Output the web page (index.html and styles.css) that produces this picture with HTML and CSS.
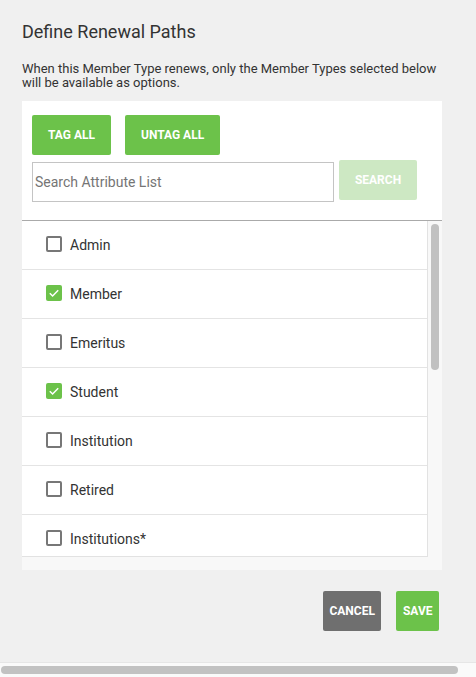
FILE: index.html
```html
<!DOCTYPE html>
<html>
<head>
<meta charset="utf-8">
<link rel="stylesheet" href="styles.css">
</head>
<body>
<div class="page">
  <div class="dialog">
    <h1 class="title">Define Renewal Paths</h1>
    <p class="desc">When this Member Type renews, only the Member Types selected below will be available as options.</p>
    <div class="panel">
      <div class="tools">
        <div class="btn-row">
          <button class="btn btn-green">TAG ALL</button>
          <button class="btn btn-green">UNTAG ALL</button>
        </div>
        <div class="search-row">
          <input class="search-input" type="text" placeholder="Search Attribute List">
          <button class="btn btn-disabled">SEARCH</button>
        </div>
      </div>
      <div class="list-wrap">
        <div class="list">
          <div class="row"><span class="cb"></span><span class="label">Admin</span></div>
          <div class="row"><span class="cb cb-on"><svg viewBox="0 0 16 16" width="16" height="16"><polyline points="3.8,8.2 6.6,11 12.2,5.2" fill="none" stroke="#fff" stroke-width="1.5"/></svg></span><span class="label">Member</span></div>
          <div class="row"><span class="cb"></span><span class="label">Emeritus</span></div>
          <div class="row"><span class="cb cb-on"><svg viewBox="0 0 16 16" width="16" height="16"><polyline points="3.8,8.2 6.6,11 12.2,5.2" fill="none" stroke="#fff" stroke-width="1.5"/></svg></span><span class="label">Student</span></div>
          <div class="row"><span class="cb"></span><span class="label">Institution</span></div>
          <div class="row"><span class="cb"></span><span class="label">Retired</span></div>
          <div class="row"><span class="cb"></span><span class="label">Institutions*</span></div>
        </div>
        <div class="vtrack"><div class="vthumb"></div></div>
      </div>
    </div>
    <div class="footer">
      <button class="btn btn-grey btn-small">CANCEL</button>
      <button class="btn btn-green btn-small">SAVE</button>
    </div>
  </div>
  <div class="htrack"><div class="hthumb"></div></div>
</div>
</body>
</html>
```

FILE: styles.css
```css
* { box-sizing: border-box; }
html, body { margin: 0; padding: 0; }
body {
  background: #f0f0f0;
  font-family: Roboto, "Liberation Sans", Arial, sans-serif;
  color: #333;
}
.page {
  height: 677px;
  display: flex;
  flex-direction: column;
  overflow: hidden;
}
.dialog {
  flex: 1;
  width: 420px;
  margin-left: 22px;
}
.title {
  margin: 21px 0 0;
  font-size: 18px;
  line-height: 21px;
  font-weight: 400;
  color: #333;
}
.desc {
  margin: 20px 0 0;
  font-size: 13px;
  line-height: 14.4px;
  color: #333;
}
.panel {
  margin-top: 10px;
  background: #fff;
}
.tools {
  padding: 14px 10px 18px 10px;
  border-bottom: 1px solid #aaaaaa;
}
.btn {
  border: none;
  border-radius: 2px;
  color: #fff;
  font-family: Roboto, "Liberation Sans", Arial, sans-serif;
  font-weight: 700;
  font-size: 12px;
  height: 40px;
  padding: 0 16px;
  cursor: pointer;
}
.btn-green { background: #6cc24a; }
.btn-disabled { background: #cde8c3; width: 78px; padding: 0; }
.btn-grey { background: #6f6f6f; }
.btn-small { padding: 0 6.5px; }
.btn-row {
  display: flex;
  gap: 14px;
}
.search-row {
  display: flex;
  align-items: flex-start;
  gap: 5px;
  margin-top: 5px;
}
.search-input {
  margin-top: 2px;
  width: 302px;
  height: 40px;
  border: 1px solid #c4c4c4;
  padding: 0 2px;
  font-family: Roboto, "Liberation Sans", Arial, sans-serif;
  font-size: 14px;
  color: #333;
  outline: none;
}
.search-input::placeholder { color: #757575; }
.list-wrap {
  display: flex;
  height: 349px;
  background: #f8f8f8;
}
.list {
  width: 406px;
  height: 336px;
  background: #fff;
  border-right: 1px solid #e2e2e2;
  border-bottom: 1px solid #e2e2e2;
  overflow: hidden;
}
.row {
  height: 49px;
  display: flex;
  align-items: center;
  gap: 8px;
  padding-left: 24px;
  border-bottom: 1px solid #e4e4e4;
  flex-shrink: 0;
}
.cb {
  width: 16px;
  height: 16px;
  border: 2px solid #777;
  border-radius: 2px;
  display: inline-flex;
  align-items: center;
  justify-content: center;
  margin-bottom: 1px;
}
.cb-on {
  border: none;
  background: #6cc24a;
}
.label {
  font-size: 14px;
  color: #333;
}
.vtrack {
  width: 14px;
  padding: 3px 3px 0 3px;
}
.vthumb {
  width: 8px;
  height: 146px;
  background: #c1c1c1;
  border-radius: 4px;
}
.footer {
  display: flex;
  justify-content: flex-end;
  gap: 15px;
  margin-top: 21px;
  padding-right: 3px;
}
.htrack {
  height: 15px;
  background: #fafafa;
  border-top: 1px solid #e6e6e6;
  padding: 3px 0 0 1px;
}
.hthumb {
  width: 457px;
  height: 8px;
  background: #c2c2c2;
  border-radius: 4px;
}
```
